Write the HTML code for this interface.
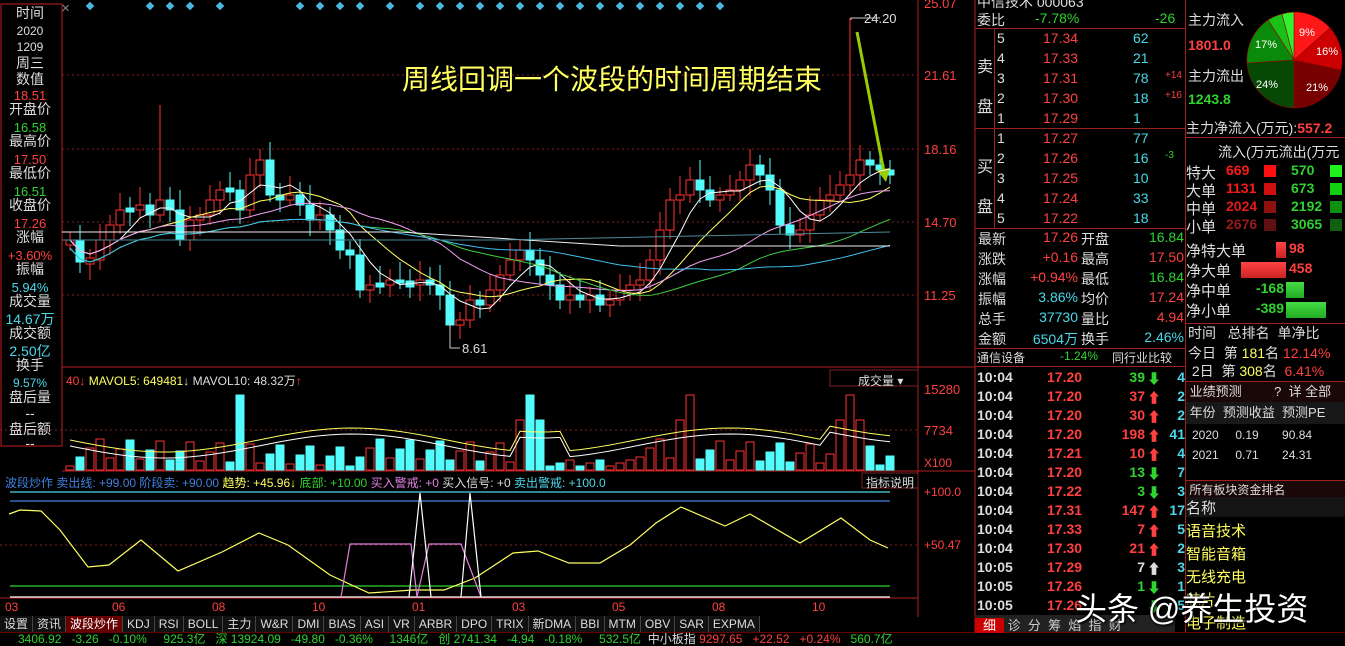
<!DOCTYPE html><html><head><meta charset="utf-8"><style>
body{margin:0;width:1345px;height:644px;background:#000;overflow:hidden;font-family:"Liberation Sans","Noto Sans CJK SC",sans-serif;position:relative}
.a{position:absolute;white-space:nowrap}
.l{left:0;width:60px;text-align:center;font-size:14px;line-height:15.5px}
.r{color:#ff4040}.g{color:#2fd32f}.c{color:#4ad8e8}.w{color:#ddd}.y{color:#ffff60}
.ob{font-size:14px;line-height:20px}
</style></head><body>
<svg class="a" style="left:0;top:0" width="1345" height="644" id="s">
<rect x="1" y="4" width="61" height="442" fill="none" stroke="#c02020"/>
<line x1="918" y1="0" x2="918" y2="617" stroke="#b02020"/>
<line x1="62" y1="367" x2="975" y2="367" stroke="#b02020"/>
<line x1="62" y1="471" x2="975" y2="471" stroke="#b02020"/>
<line x1="0" y1="598" x2="918" y2="598" stroke="#b02020"/>
<line x1="975" y1="0" x2="975" y2="632" stroke="#b02020"/>
<g stroke="#802020" stroke-dasharray="2,3"><line x1="62" y1="75" x2="918" y2="75"/><line x1="62" y1="149" x2="918" y2="149"/><line x1="62" y1="222" x2="918" y2="222"/><line x1="62" y1="295" x2="918" y2="295"/><line x1="0" y1="430" x2="918" y2="430"/><line x1="0" y1="545" x2="918" y2="545"/></g>
<g id="cd"></g>
<polyline points="851,20 851,18 880,18" fill="none" stroke="#ccc"/>
<polyline points="450,322 450,348 460,348" fill="none" stroke="#ccc"/>
<line x1="857" y1="32" x2="884" y2="172" stroke="#9acd00" stroke-width="3"/>
<polygon points="877,170 890,168 886,182" fill="#9acd00"/>
<g fill="none" stroke-width="1.2">
<line x1="10" y1="492" x2="890" y2="492" stroke="#4ad8e8"/><line x1="10" y1="501" x2="890" y2="501" stroke="#4080e0"/>
<line x1="10" y1="586" x2="890" y2="586" stroke="#2fd32f"/><line x1="10" y1="597" x2="890" y2="597" stroke="#fff"/>
<polyline stroke="#ffff60" points="9,514 20,510 41,511 60,530 88,567 109,565 141,540 178,571 222,552 259,533 288,545 330,575 369,593 413,590 444,590 475,578 513,553 538,551 569,563 600,563 630,545 656,523 681,507 725,526 750,514 800,543 841,518 870,540 888,548"/>
<polyline stroke="#e080e0" points="341,597 350,544 411,544 417,597 429,544 461,544 481,597"/>
<polyline stroke="#fff" points="409,597 420,493 431,597"/><polyline stroke="#fff" points="461,597 470,493 481,597"/>
</g>
<rect x="830" y="370" width="88" height="16" fill="#000" stroke="#802020"/>
<rect x="862" y="473" width="56" height="15" fill="#000" stroke="#802020"/>
</svg>
<div class="a" style="color:#888;font-size:11px;left:61px;top:2px">✕</div>
<div class="a l w" style="top:6px">时间</div><div class="a l w" style="top:24px;font-size:12px">2020</div><div class="a l w" style="top:40px;font-size:12px">1209</div>
<div class="a l w" style="top:56px">周三</div><div class="a l w" style="top:72px">数值</div>
<div class="a l r" style="top:88px;font-size:13px">18.51</div><div class="a l w" style="top:102px">开盘价</div>
<div class="a l g" style="top:120px;font-size:13px">16.58</div><div class="a l w" style="top:134px">最高价</div>
<div class="a l r" style="top:152px;font-size:13px">17.50</div><div class="a l w" style="top:166px">最低价</div>
<div class="a l g" style="top:184px;font-size:13px">16.51</div><div class="a l w" style="top:198px">收盘价</div>
<div class="a l r" style="top:216px;font-size:13px">17.26</div><div class="a l w" style="top:230px">涨幅</div>
<div class="a l r" style="top:248px;font-size:13px">+3.60%</div><div class="a l w" style="top:262px">振幅</div>
<div class="a l c" style="top:280px;font-size:13px">5.94%</div><div class="a l w" style="top:294px">成交量</div>
<div class="a l c" style="top:312px">14.67万</div><div class="a l w" style="top:326px">成交额</div>
<div class="a l c" style="top:344px">2.50亿</div><div class="a l w" style="top:358px">换手</div>
<div class="a l c" style="top:376px;font-size:12px">9.57%</div><div class="a l w" style="top:390px">盘后量</div>
<div class="a l w" style="top:406px">--</div><div class="a l w" style="top:422px">盘后额</div><div class="a l w" style="top:436px">--</div>
<div class="a y" style="left:402px;top:58px;font-size:28px">周线回调一个波段的时间周期结束</div>
<div class="a w" style="left:864px;top:11px;font-size:13px">24.20</div><div class="a w" style="left:462px;top:341px;font-size:13px">8.61</div>
<div class="a r" style="left:924px;top:-4px;font-size:13px">25.07</div><div class="a r" style="left:924px;top:68px;font-size:13px">21.61</div><div class="a r" style="left:924px;top:142px;font-size:13px">18.16</div><div class="a r" style="left:924px;top:215px;font-size:13px">14.70</div><div class="a r" style="left:924px;top:288px;font-size:13px">11.25</div>
<div class="a r" style="left:924px;top:382px;font-size:13px">15280</div><div class="a r" style="left:924px;top:423px;font-size:13px">7734</div><div class="a r" style="left:924px;top:456px;font-size:12px">X100</div>
<div class="a r" style="left:924px;top:485px;font-size:12px">+100.0</div><div class="a r" style="left:924px;top:538px;font-size:12px">+50.47</div>
<div class="a" style="left:66px;top:372px;font-size:12px"><span class="r">40</span><span class="r">↓</span> <span class="y">MAVOL5: 649481</span><span class="w">↓</span> <span class="w">MAVOL10: 48.32万</span><span class="r">↑</span></div>
<div class="a w" style="left:858px;top:372px;font-size:12px">成交量 ▾</div>
<div class="a" style="left:5px;top:474px;font-size:12px"><span style="color:#4080e0">波段炒作 卖出线: +99.00 阶段卖: +90.00</span> <span class="y">趋势: +45.96↓</span> <span class="g">底部: +10.00</span> <span style="color:#e080e0">买入警戒: +0</span> <span class="w">买入信号: +0</span> <span class="c">卖出警戒: +100.0</span></div>
<div class="a w" style="left:866px;top:474px;font-size:12px">指标说明</div>
<div class="a r" style="top:600px;left:0;font-size:12px;width:900px;height:14px"><span class="a" style="left:5px">03</span><span class="a" style="left:112px">06</span><span class="a" style="left:212px">08</span><span class="a" style="left:312px">10</span><span class="a" style="left:412px">01</span><span class="a" style="left:512px">03</span><span class="a" style="left:612px">05</span><span class="a" style="left:712px">08</span><span class="a" style="left:812px">10</span></div>
<div class="a" style="left:0;top:616px;height:16px;font-size:12px;color:#ddd;display:flex" id="tb"></div>
<div class="a" style="left:0;top:632px;width:1345px;height:12px;background:#000;font-size:12px;line-height:12px;border-top:1px solid #600"><span class="g" style="margin-left:18px">3406.92 &nbsp; -3.26 &nbsp; -0.10% &nbsp; &nbsp; 925.3亿 &nbsp; 深 13924.09 &nbsp; -49.80 &nbsp; -0.36% &nbsp; &nbsp; 1346亿 &nbsp; 创 2741.34 &nbsp; -4.94 &nbsp; -0.18% &nbsp; &nbsp; 532.5亿 &nbsp;</span><span class="w">中小板指</span> <span class="r">9297.65 &nbsp; +22.52 &nbsp; +0.24% &nbsp;</span> <span class="g">560.7亿</span></div>
<div class="a" style="left:975px;top:0;width:210px;height:632px;font-size:14px">
<div class="a w" style="left:2px;top:-8px">中信技术 000063</div>
<div class="a w" style="left:2px;top:10px">委比</div><div class="a g" style="left:60px;top:10px">-7.78%</div><div class="a g" style="left:180px;top:10px">-26</div>
<div style="position:absolute;left:0;top:28px;width:210px;border-top:1px solid #a02020"></div>
<div class="a w" style="left:2px;top:48px;font-size:16px;line-height:40px">卖<br>盘</div><div class="a w" style="left:2px;top:148px;font-size:16px;line-height:40px">买<br>盘</div>
<div style="position:absolute;left:19px;top:28px;height:200px;border-left:1px solid #a02020"></div>
<div style="position:absolute;left:0;top:128px;width:210px;border-top:1px solid #a02020"></div>
<div style="position:absolute;left:0;top:228px;width:210px;border-top:1px solid #a02020"></div>
<div id="ob"></div>
<div style="position:absolute;left:0;top:348px;width:210px;border-top:1px solid #a02020"></div>
<div class="a w" style="left:2px;top:349px;font-size:12px">通信设备</div><div class="a g" style="left:85px;top:349px;font-size:12px">-1.24%</div><div class="a w" style="left:137px;top:349px;font-size:12px">同行业比较</div>
<div style="position:absolute;left:0;top:366px;width:210px;border-top:1px solid #a02020"></div>
<div id="tk"></div>
</div>
<div class="a" style="left:1185px;top:0;width:160px;height:632px;font-size:14px;border-left:1px solid #a02020">
<div class="a w" style="left:2px;top:10px">主力流入</div><div class="a r" style="left:2px;top:37px;font-weight:bold">1801.0</div>
<div class="a w" style="left:2px;top:66px">主力流出</div><div class="a g" style="left:2px;top:91px;font-weight:bold">1243.8</div>
<svg class="a" style="left:56px;top:8px" width="104" height="104"><g transform="translate(52,52)" stroke="#900" stroke-width="0.6">
<path d="M0,0 L0,-48 A48,48 0 0,1 36,-32 Z" fill="#ff1818"/><path d="M0,0 L36,-32 A48,48 0 0,1 47,10 Z" fill="#c00"/><path d="M0,0 L47,10 A48,48 0 0,1 0,48 Z" fill="#700"/><path d="M0,0 L0,48 A48,48 0 0,1 -47,3 Z" fill="#064806"/><path d="M0,0 L-47,3 A48,48 0 0,1 -26,-40 Z" fill="#0a8a0a"/><path d="M0,0 L-26,-40 A48,48 0 0,1 -12,-46 Z" fill="#18c018"/><path d="M0,0 L-12,-46 A48,48 0 0,1 0,-48 Z" fill="#30f030"/></g>
<g fill="#fff" font-size="11"><text x="57" y="28">9%</text><text x="74" y="47">16%</text><text x="64" y="83">21%</text><text x="14" y="80">24%</text><text x="13" y="40">17%</text></g></svg>
<div class="a w" style="left:0;top:118px">主力净流入(万元):<span class="r" style="font-weight:bold">557.2</span></div>
<div style="position:absolute;left:0;top:137px;width:160px;border-top:1px solid #a02020"></div>
<div class="a w" style="left:32px;top:142px">流入(万元流出(万元</div>
<div id="fl"></div>
<div style="position:absolute;left:0;top:323px;width:160px;border-top:1px solid #a02020"></div>
<div class="a w" style="left:2px;top:323px">时间 &nbsp; 总排名 &nbsp;单净比</div>
<div class="a w" style="left:2px;top:343px">今日 &nbsp;第 <span class="y">181</span>名 <span class="r">12.14%</span></div>
<div class="a w" style="left:2px;top:361px">&nbsp;2日 &nbsp;第 <span class="y">308</span>名 &nbsp;<span class="r">6.41%</span></div>
<div class="a" style="left:0;top:381px;width:160px;height:20px;background:#1a0808;border-top:1px solid #a02020;border-bottom:1px solid #a02020;color:#ddd;font-size:13px;line-height:20px">&nbsp;业绩预测 &nbsp; &nbsp; &nbsp; &nbsp; ? &nbsp;详 全部</div>
<div class="a w" style="left:0;top:402px;width:160px;height:22px;background:#181818;font-size:13px;line-height:22px">&nbsp;年份 &nbsp;预测收益 &nbsp;预测PE</div>
<div class="a w" style="left:6px;top:428px;font-size:12px">2020 &nbsp; &nbsp; 0.19 &nbsp; &nbsp; &nbsp; 90.84</div>
<div class="a w" style="left:6px;top:448px;font-size:12px">2021 &nbsp; &nbsp; 0.71 &nbsp; &nbsp; &nbsp; 24.31</div>
<div class="a w" style="left:0;top:480px;width:160px;height:16px;background:#1a0808;border-top:1px solid #a02020;font-size:12px">&nbsp;所有板块资金排名</div>
<div class="a w" style="left:0;top:497px;width:160px;height:20px;background:#141414;font-size:15px">名称</div>
<div class="a y" style="left:0;top:520px;font-size:15px;line-height:23px">语音技术<br>智能音箱<br>无线充电<br>芯片<br>电子制造</div>
</div>
<div class="a" style="left:1075px;top:584px;font-size:32px;color:#fff;text-shadow:0 0 3px #000,1px 1px 2px #000">头条 @养生投资</div>
<script>
var NS="http://www.w3.org/2000/svg",s=document.getElementById('s');
function el(t,a,p){var e=document.createElementNS(NS,t);for(var k in a)e.setAttribute(k,a[k]);(p||s).appendChild(e);return e}
var Y=[240,262,260,240,225,210,210,205,215,200,210,240,220,215,200,190,190,210,175,160,195,200,195,205,220,215,230,250,255,290,285,285,280,283,285,280,285,295,325,320,300,305,290,275,260,250,260,275,285,300,295,300,295,305,300,290,285,280,260,230,200,195,180,190,200,195,190,180,165,175,190,225,235,230,215,200,195,185,175,160,165,170,175];
var cd=document.getElementById('cd');
for(var i=0;i<Y.length;i++){var x=70+i*10,o=i?Y[i-1]:Y[0]+5,c=Y[i],up=c<o;var t=Math.min(o,c),b=Math.max(o,c);if(b-t<3){t-=2;b+=2}
var hi=t-8-(i*7%13),lo=b+6+(i*5%11);if(i==78)hi=18;if(i==38)lo=322;if(i==9)hi=105;
var col=up?'#ff3232':'#54fcfc';el('line',{x1:x,y1:hi,x2:x,y2:lo,stroke:col},cd);el('rect',{x:x-4,y:t,width:8,height:b-t,fill:up?'#000':col,stroke:col},cd);
var vh=4+((i*37)%28);if(i>=48&&i<=56)vh=4+(i%3)*3;if([17,46,62,78].indexOf(i)>=0)vh=75;if([45,47,61,77,79].indexOf(i)>=0)vh=50;var vc=up?'#ff3232':'#54fcfc';el('rect',{x:x-4,y:470-vh,width:8,height:vh,fill:up?'#000':vc,stroke:vc});}
function ma(n,col){var p=[];for(var i=0;i<Y.length;i++){var a=0,k=0;for(var j=Math.max(0,i-n+1);j<=i;j++){a+=Y[j];k++}p.push((70+i*10)+','+(a/k+(n>20?8:0)))}el('polyline',{points:p.join(' '),fill:'none',stroke:col});}
ma(5,'#fff');ma(10,'#ffff60');ma(20,'#f0a0f0');ma(30,'#40d040');ma(45,'#40c0f0');
function vma(n,col){var p=[];for(var i=0;i<Y.length;i++){var v=440+12*Math.sin(i/6)+(i>44&&i<50?-20:0)+(i>75?-15:0)+(n>5?6:0);p.push((70+i*10)+','+v)}el('polyline',{points:p.join(' '),fill:'none',stroke:col});}
vma(5,'#ffff60');vma(10,'#fff');
el('polyline',{points:'62,232 400,232 620,246 890,246',fill:'none',stroke:'#eee'});el('polyline',{points:'62,240 500,240 890,232',fill:'none',stroke:'#4a8a9a'});
var dx=[90,150,170,190,220,300,320,340,360,390,420,440,460,480,500,520,540,560,580,600,620,640,660,680,700,720];
dx.forEach(function(x){el('rect',{x:x-3,y:3,width:6,height:6,fill:'#4ab8e0',transform:'rotate(45 '+x+' 6)'})});
var ob=document.getElementById('ob'),h='';
var rows=[['5','17.34','62',''],['4','17.33','21',''],['3','17.31','78','+14'],['2','17.30','18','+16'],['1','17.29','1',''],['1','17.27','77',''],['2','17.26','16','-3'],['3','17.25','10',''],['4','17.24','33',''],['5','17.22','18','']];
rows.forEach(function(r,i){var t=30+i*20;h+='<div class="a w" style="left:22px;top:'+t+'px">'+r[0]+'</div><div class="a r" style="left:68px;top:'+t+'px">'+r[1]+'</div><div class="a c" style="left:158px;top:'+t+'px">'+r[2]+'</div><div class="a '+(r[3][0]=='-'?'g':'r')+'" style="left:190px;top:'+t+'px;font-size:10px">'+r[3]+'</div>'});
var st=[['最新','17.26','r','开盘','16.84','g'],['涨跌','+0.16','r','最高','17.50','r'],['涨幅','+0.94%','r','最低','16.84','g'],['振幅','3.86%','c','均价','17.24','r'],['总手','37730','c','量比','4.94','r'],['金额','6504万','c','换手','2.46%','c']];
st.forEach(function(r,i){var t=229+i*20;h+='<div class="a w" style="left:3px;top:'+t+'px">'+r[0]+'</div><div class="a '+r[2]+'" style="right:107px;top:'+t+'px">'+r[1]+'</div><div class="a w" style="left:106px;top:'+t+'px">'+r[3]+'</div><div class="a '+r[5]+'" style="right:1px;top:'+t+'px">'+r[4]+'</div>'});
ob.innerHTML=h;h='';
var tk=[['10:04','17.20','39','g','4'],['10:04','17.20','37','r','2'],['10:04','17.20','30','r','2'],['10:04','17.20','198','r','41'],['10:04','17.21','10','r','4'],['10:04','17.20','13','g','7'],['10:04','17.22','3','g','3'],['10:04','17.31','147','r','17'],['10:04','17.33','7','r','5'],['10:04','17.30','21','r','2'],['10:05','17.29','7','w','3'],['10:05','17.26','1','g','1'],['10:05','17.26','','g','5']];
tk.forEach(function(r,i){var t=369+i*19;h+='<div class="a w" style="left:2px;top:'+t+'px;font-weight:bold">'+r[0]+'</div><div class="a r" style="left:72px;top:'+t+'px;font-weight:bold">'+r[1]+'</div><div class="a '+r[3]+'" style="right:40px;top:'+t+'px;font-weight:bold">'+r[2]+'</div><div class="a '+r[3]+'" style="left:172px;top:'+t+'px">'+(r[3]=='g'?'⬇':'⬆')+'</div><div class="a c" style="right:0;top:'+t+'px;font-weight:bold">'+r[4]+'</div>'});
h+='<div class="a" style="left:0;top:615px;width:200px;height:17px;font-size:13px;color:#ccc;background:#222"><span style="background:#c00;color:#fff;padding:0 8px">细</span> 诊 &nbsp;分 &nbsp;筹 &nbsp;焰 &nbsp;指 &nbsp;财</div>';
document.getElementById('tk').innerHTML=h;h='';
var fl=[['特大','669','#ff1010','570','#20f020'],['大单','1131','#d01010','673','#10d010'],['中单','2024','#901010','2192','#109010'],['小单','2676','#601010','3065','#106010']];
fl.forEach(function(r,i){var t=162+i*18;h+='<div class="a w" style="left:0;top:'+t+'px;font-size:15px">'+r[0]+'</div><div class="a" style="left:40px;top:'+t+'px;color:'+r[2]+';font-weight:bold;filter:brightness(1.6)">'+r[1]+'</div><div class="a" style="left:78px;top:'+(t+3)+'px;width:12px;height:12px;background:'+r[2]+'"></div><div class="a" style="left:105px;top:'+t+'px;color:#30d030;font-weight:bold">'+r[3]+'</div><div class="a" style="left:144px;top:'+(t+3)+'px;width:12px;height:12px;background:'+r[4]+'"></div>'});
var nf=[['净特大单','98',10,'r'],['净大单','458',45,'r'],['净中单','-168',18,'g'],['净小单','-389',40,'g']];
nf.forEach(function(r,i){var t=240+i*20;h+='<div class="a w" style="left:0;top:'+t+'px;font-size:15px">'+r[0]+'</div>';if(r[3]=='r'){h+='<div class="a" style="left:'+(100-r[2])+'px;top:'+(t+2)+'px;width:'+r[2]+'px;height:16px;background:linear-gradient(#f44,#c22)"></div><div class="a r" style="left:103px;top:'+t+'px;font-weight:bold">'+r[1]+'</div>'}else{h+='<div class="a g" style="right:62px;top:'+t+'px;font-weight:bold">'+r[1]+'</div><div class="a" style="left:100px;top:'+(t+2)+'px;width:'+r[2]+'px;height:16px;background:linear-gradient(#4d4,#2a2)"></div>'}});
document.getElementById('fl').innerHTML=h;
var tabs=['设置','资讯','波段炒作','KDJ','RSI','BOLL','主力','W&R','DMI','BIAS','ASI','VR','ARBR','DPO','TRIX','新DMA','BBI','MTM','OBV','SAR','EXPMA'],tb=document.getElementById('tb');
tabs.forEach(function(t,i){var d=document.createElement('div');d.textContent=t;d.style.cssText='padding:0 4px;border-right:1px solid #444;line-height:16px;'+(i==2?'background:#600;color:#fff':'background:#111');tb.appendChild(d)});
</script>
</body></html>
